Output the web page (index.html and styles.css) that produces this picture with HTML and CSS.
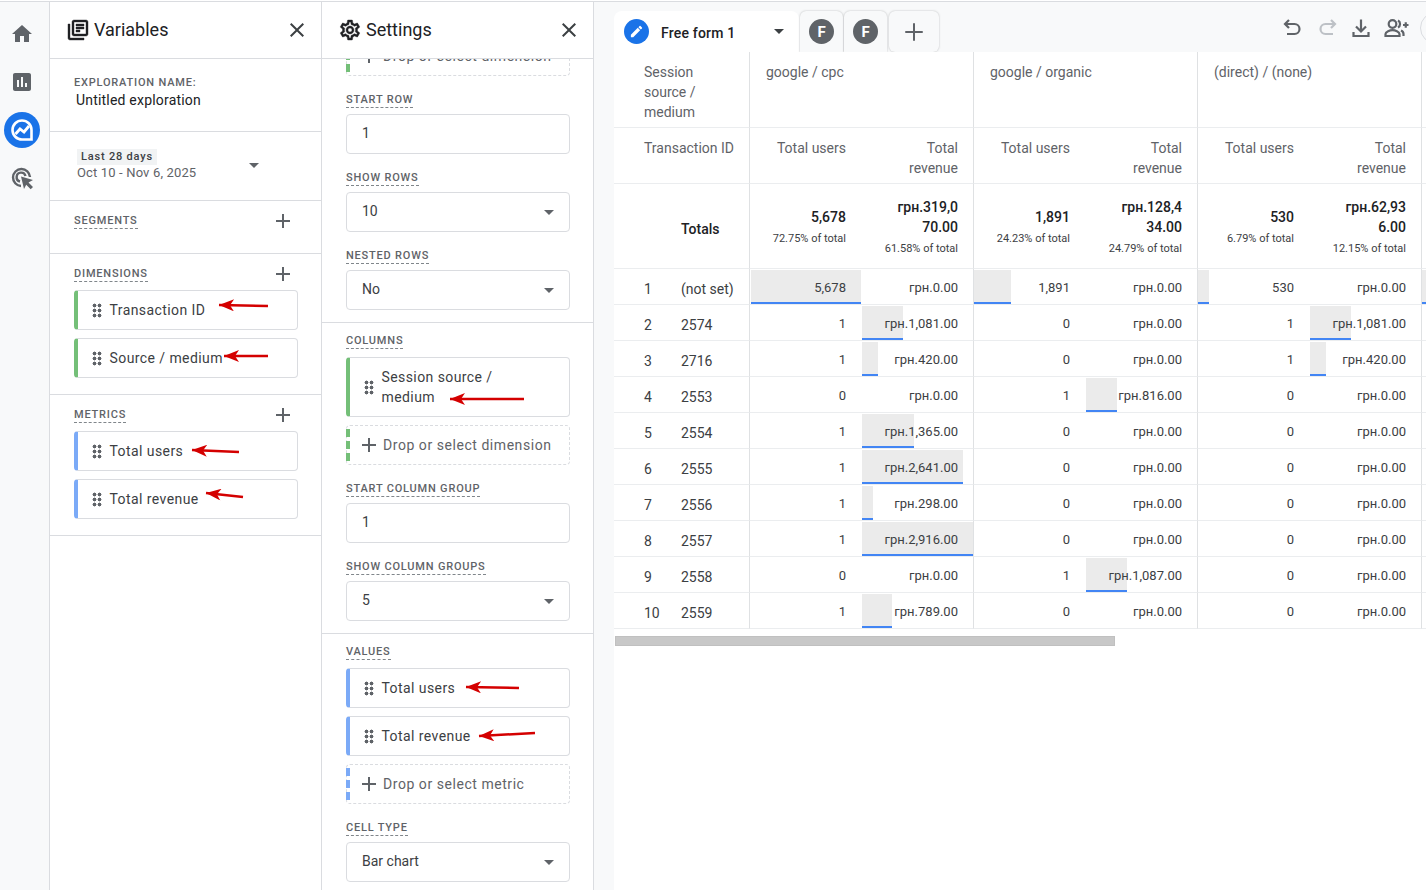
FILE: index.html
```html
<!DOCTYPE html>
<html lang="en">
<head>
<meta charset="utf-8">
<title>Free form 1</title>
<link rel="stylesheet" href="styles.css">
</head>
<body>
<div class="app">
  <nav class="rail">
    <svg class="rail-ico" viewBox="0 0 24 24"><path d="M10 20v-6h4v6h5v-8h3L12 3 2 12h3v8z"/></svg>
    <svg class="rail-ico rail-rep" viewBox="0 0 24 24"><path d="M19 3H5c-1.1 0-2 .9-2 2v14c0 1.1.9 2 2 2h14c1.1 0 2-.9 2-2V5c0-1.1-.9-2-2-2zM9 17H7v-7h2v7zm4 0h-2V7h2v10zm4 0h-2v-4h2v4z"/></svg>
    <svg class="rail-active" viewBox="0 0 36 36"><circle cx="18" cy="18" r="18" fill="#1a73e8"/><path d="M18 8.500a9.500 9.500 0 1 0 0 19h9.500V18A9.500 9.500 0 0 0 18 8.500z" fill="none" stroke="#fff" stroke-width="2.600"/><path d="M11.500 22l4.500-5 4 3 5-6" fill="none" stroke="#fff" stroke-width="2.800"/></svg>
    <svg class="rail-ico rail-adv" viewBox="0 0 24 24"><path d="M20 11a8.500 8.500 0 1 0-9 9" fill="none" stroke="#5f6368" stroke-width="2.400"/><path d="M15.500 10a4.500 4.500 0 1 0-5.500 5.500" fill="none" stroke="#5f6368" stroke-width="2.400"/><path d="M11 10.500l12 3.500-4.500 2.500 4.500 4.500-2.300 2.300-4.500-4.500-2.200 4.200z"/></svg>
  </nav>

  <aside class="panel">
    <header class="panel-head">
      <svg class="ico24 ink" viewBox="0 0 24 24"><path d="M4 6H2v14c0 1.100.9 2 2 2h14v-2H4V6zm16-4H8c-1.100 0-2 .9-2 2v12c0 1.100.9 2 2 2h12c1.100 0 2-.9 2-2V4c0-1.100-.9-2-2-2zm0 14H8V4h12v12zM10 9h8v2h-8zm0 3h4v2h-4zm0-6h8v2h-8z"/></svg>
      <span class="panel-title">Variables</span>
      <svg class="ico24 close" viewBox="0 0 24 24"><path d="M19 6.410 17.590 5 12 10.590 6.410 5 5 6.410 10.590 12 5 17.590 6.410 19 12 13.410 17.590 19 19 17.590 13.410 12z"/></svg>
    </header>
    <section class="sec sec-name">
      <div class="cap">Exploration name:</div>
      <div class="name">Untitled exploration</div>
    </section>
    <section class="sec sec-date">
      <div>
        <div class="date-chip">Last 28 days</div>
        <div class="date-range">Oct 10 - Nov 6, 2025</div>
      </div>
      <span class="caret"></span>
    </section>
    <section class="sec sec-seg">
      <div class="sec-row"><span class="label">Segments</span><svg class="ico24 grey plus" viewBox="0 0 24 24"><path d="M19 13h-6v6h-2v-6H5v-2h6V5h2v6h6v2z"/></svg></div>
    </section>
    <section class="sec sec-list">
      <div class="sec-row"><span class="label">Dimensions</span><svg class="ico24 grey plus" viewBox="0 0 24 24"><path d="M19 13h-6v6h-2v-6H5v-2h6V5h2v6h6v2z"/></svg></div>
      <div class="chip chip-dim"><i class="grip"></i><span>Transaction ID</span></div>
      <div class="chip chip-dim"><i class="grip"></i><span>Source / medium</span></div>
    </section>
    <section class="sec sec-list">
      <div class="sec-row"><span class="label">Metrics</span><svg class="ico24 grey plus" viewBox="0 0 24 24"><path d="M19 13h-6v6h-2v-6H5v-2h6V5h2v6h6v2z"/></svg></div>
      <div class="chip chip-met"><i class="grip"></i><span>Total users</span></div>
      <div class="chip chip-met"><i class="grip"></i><span>Total revenue</span></div>
    </section>
  </aside>

  <aside class="panel">
    <header class="panel-head">
      <svg class="ico24 ink" viewBox="0 0 24 24"><path d="M19.430 12.980c.04-.32.07-.64.07-.98 0-.34-.03-.66-.07-.98l2.110-1.650c.19-.15.24-.42.12-.64l-2-3.460c-.09-.16-.26-.25-.44-.25-.06 0-.12.01-.17.03l-2.490 1c-.52-.4-1.080-.73-1.690-.98l-.38-2.650C14.460 2.180 14.250 2 14 2h-4c-.25 0-.46.18-.49.42l-.38 2.650c-.61.25-1.170.59-1.690.98l-2.490-1c-.06-.02-.12-.03-.18-.03-.17 0-.34.09-.43.25l-2 3.460c-.13.22-.07.49.12.64l2.110 1.650c-.04.32-.07.65-.07.98 0 .33.03.66.07.98l-2.110 1.650c-.19.15-.24.42-.12.64l2 3.460c.09.16.26.25.44.25.06 0 .12-.01.17-.03l2.490-1c.52.4 1.080.73 1.690.98l.38 2.650c.03.24.24.42.49.42h4c.25 0 .46-.18.49-.42l.38-2.650c.61-.25 1.170-.59 1.690-.98l2.490 1c.06.02.12.03.18.03.17 0 .34-.09.43-.25l2-3.460c.12-.22.07-.49-.12-.64l-2.110-1.650zm-1.980-1.710c.04.31.05.52.05.73 0 .21-.02.43-.05.73l-.14 1.130.89.7 1.080.84-.7 1.210-1.270-.51-1.040-.42-.9.68c-.43.32-.84.56-1.250.73l-1.060.43-.16 1.130-.2 1.350h-1.400l-.19-1.350-.16-1.130-1.060-.43c-.43-.18-.83-.41-1.230-.71l-.91-.7-1.060.43-1.270.51-.7-1.210 1.080-.84.89-.7-.14-1.130c-.03-.31-.05-.54-.05-.74s.02-.43.05-.73l.14-1.130-.89-.7-1.080-.84.7-1.210 1.270.51 1.040.42.9-.68c.43-.32.84-.56 1.250-.73l1.060-.43.16-1.130.2-1.350h1.390l.19 1.350.16 1.130 1.060.43c.43.18.83.41 1.230.71l.91.7 1.060-.43 1.270-.51.7 1.210-1.070.85-.89.7.14 1.130zM12 8c-2.210 0-4 1.790-4 4s1.790 4 4 4 4-1.790 4-4-1.790-4-4-4zm0 6c-1.100 0-2-.9-2-2s.9-2 2-2 2 .9 2 2-.9 2-2 2z"/></svg>
      <span class="panel-title">Settings</span>
      <svg class="ico24 close" viewBox="0 0 24 24"><path d="M19 6.410 17.590 5 12 10.590 6.410 5 5 6.410 10.590 12 5 17.590 6.410 19 12 13.410 17.590 19 19 17.590 13.410 12z"/></svg>
    </header>
    <div class="scroll">
      <div class="scroll-in">
        <section class="set set-first">
          <div class="drop"><i class="dropbar dropbar-dim"></i><svg class="ico24 grey" viewBox="0 0 24 24"><path d="M19 13h-6v6h-2v-6H5v-2h6V5h2v6h6v2z"/></svg><span>Drop or select dimension</span></div>
          <div class="field"><span class="label">Start row</span><div class="input">1</div></div>
          <div class="field"><span class="label">Show rows</span><div class="input">10<span class="caret"></span></div></div>
          <div class="field"><span class="label">Nested rows</span><div class="input">No<span class="caret"></span></div></div>
        </section>
        <section class="set">
          <span class="label">Columns</span>
          <div class="chip chip-dim chip-tall"><i class="grip"></i><span>Session source /<br>medium</span></div>
          <div class="drop"><i class="dropbar dropbar-dim"></i><svg class="ico24 grey" viewBox="0 0 24 24"><path d="M19 13h-6v6h-2v-6H5v-2h6V5h2v6h6v2z"/></svg><span>Drop or select dimension</span></div>
          <div class="field"><span class="label">Start column group</span><div class="input">1</div></div>
          <div class="field"><span class="label">Show column groups</span><div class="input">5<span class="caret"></span></div></div>
        </section>
        <section class="set set-last">
          <span class="label">Values</span>
          <div class="chip chip-met"><i class="grip"></i><span>Total users</span></div>
          <div class="chip chip-met"><i class="grip"></i><span>Total revenue</span></div>
          <div class="drop"><i class="dropbar dropbar-met"></i><svg class="ico24 grey" viewBox="0 0 24 24"><path d="M19 13h-6v6h-2v-6H5v-2h6V5h2v6h6v2z"/></svg><span>Drop or select metric</span></div>
          <div class="field"><span class="label">Cell type</span><div class="input">Bar chart<span class="caret"></span></div></div>
        </section>
      </div>
    </div>
  </aside>

  <main class="main">
    <div class="tabbar">
      <div class="tab tab-on">
        <span class="tab-circle tab-blue"><svg viewBox="0 0 24 24"><path d="M3 17.250V21h3.750L17.810 9.940l-3.750-3.750L3 17.250zM20.710 7.040a1 1 0 0 0 0-1.410l-2.340-2.340a1 1 0 0 0-1.410 0l-1.830 1.830 3.750 3.750 1.830-1.830z"/></svg></span>
        <span class="tab-name">Free form 1</span>
        <span class="caret caret-dark"></span>
      </div>
      <div class="tab tab-s"><span class="tab-circle">F</span></div>
      <div class="tab tab-s"><span class="tab-circle">F</span></div>
      <div class="tab tab-add"><svg class="grey" viewBox="0 0 24 24"><path d="M19 12.800h-6.200V19h-1.600v-6.200H5v-1.600h6.200V5h1.600v6.200H19z"/></svg></div>
      <div class="tools">
        <svg class="tool" viewBox="0 0 24 24"><path d="M9 4 5 8l4 4M5 8h9.500a5 5 0 0 1 0 10H7"/></svg>
        <svg class="tool tool-off" viewBox="0 0 24 24"><path d="m15 4 4 4-4 4M19 8H9.500a5 5 0 0 0 0 10H17"/></svg>
        <svg class="tool tool-dl" viewBox="0 0 24 24"><path d="M12 3.500V15M7 10.500l5 5 5-5M4.500 16v4h15v-4"/></svg>
        <svg class="tool tool-share" viewBox="0 0 26 24"><circle cx="9.500" cy="8" r="3.800"/><path d="M2.500 20v-2c0-2.500 4.500-3.800 7-3.800s7 1.300 7 3.800v2zM15 4.500a4 4 0 0 1 0 7M18 14.500c1.500.7 2.500 2 2.500 3.500v2M20 9h5.500M22.750 6.200v5.600"/></svg>
        <span class="tool-ring"></span>
      </div>
    </div>

    <div class="canvas">
      <div class="grid">
        <div class="c h1 vb head-dim">Session source / medium</div>
        <div class="c h1 vb span2">google / cpc</div>
        <div class="c h1 vb span2">google / organic</div>
        <div class="c h1 vb span2">(direct) / (none)</div>
        <div class="c h1"></div>

        <div class="c h2 h2-dim vb">Transaction ID</div>
        <div class="c h2 n">Total users</div><div class="c h2 n vb">Total revenue</div>
        <div class="c h2 n">Total users</div><div class="c h2 n vb">Total revenue</div>
        <div class="c h2 n">Total users</div><div class="c h2 n vb">Total revenue</div>
        <div class="c h2"></div>

        <div class="c tot tot-dim vb"><span class="tot-name">Totals</span></div>
        <div class="c tot n"><b>5,678</b><small>72.75% of total</small></div>
        <div class="c tot n vb"><b>грн.319,0<br>70.00</b><small>61.58% of total</small></div>
        <div class="c tot n"><b>1,891</b><small>24.23% of total</small></div>
        <div class="c tot n vb"><b>грн.128,4<br>34.00</b><small>24.79% of total</small></div>
        <div class="c tot n"><b>530</b><small>6.79% of total</small></div>
        <div class="c tot n vb"><b>грн.62,93<br>6.00</b><small>12.15% of total</small></div>
        <div class="c tot"></div>

        <div class="c r id vb"><span class="i">1</span>(not set)</div>
        <div class="c r n"><i class="bar bar-in" style="width:110px"></i><span>5,678</span></div><div class="c r n vb"><span>грн.0.00</span></div>
        <div class="c r n"><i class="bar" style="width:37px"></i><span>1,891</span></div><div class="c r n vb"><span>грн.0.00</span></div>
        <div class="c r n"><i class="bar" style="width:11px"></i><span>530</span></div><div class="c r n vb"><span>грн.0.00</span></div>
        <div class="c r"><i class="bar" style="width:4px"></i></div>

        <div class="c r id vb"><span class="i">2</span>2574</div>
        <div class="c r n"><span>1</span></div><div class="c r n vb"><i class="bar" style="width:41px"></i><span>грн.1,081.00</span></div>
        <div class="c r n"><span>0</span></div><div class="c r n vb"><span>грн.0.00</span></div>
        <div class="c r n"><span>1</span></div><div class="c r n vb"><i class="bar" style="width:41px"></i><span>грн.1,081.00</span></div>
        <div class="c r"></div>

        <div class="c r id vb"><span class="i">3</span>2716</div>
        <div class="c r n"><span>1</span></div><div class="c r n vb"><i class="bar" style="width:16px"></i><span>грн.420.00</span></div>
        <div class="c r n"><span>0</span></div><div class="c r n vb"><span>грн.0.00</span></div>
        <div class="c r n"><span>1</span></div><div class="c r n vb"><i class="bar" style="width:16px"></i><span>грн.420.00</span></div>
        <div class="c r"></div>

        <div class="c r id vb"><span class="i">4</span>2553</div>
        <div class="c r n"><span>0</span></div><div class="c r n vb"><span>грн.0.00</span></div>
        <div class="c r n"><span>1</span></div><div class="c r n vb"><i class="bar" style="width:31px"></i><span>грн.816.00</span></div>
        <div class="c r n"><span>0</span></div><div class="c r n vb"><span>грн.0.00</span></div>
        <div class="c r"></div>

        <div class="c r id vb"><span class="i">5</span>2554</div>
        <div class="c r n"><span>1</span></div><div class="c r n vb"><i class="bar" style="width:52px"></i><span>грн.1,365.00</span></div>
        <div class="c r n"><span>0</span></div><div class="c r n vb"><span>грн.0.00</span></div>
        <div class="c r n"><span>0</span></div><div class="c r n vb"><span>грн.0.00</span></div>
        <div class="c r"></div>

        <div class="c r id vb"><span class="i">6</span>2555</div>
        <div class="c r n"><span>1</span></div><div class="c r n vb"><i class="bar" style="width:101px"></i><span>грн.2,641.00</span></div>
        <div class="c r n"><span>0</span></div><div class="c r n vb"><span>грн.0.00</span></div>
        <div class="c r n"><span>0</span></div><div class="c r n vb"><span>грн.0.00</span></div>
        <div class="c r"></div>

        <div class="c r id vb"><span class="i">7</span>2556</div>
        <div class="c r n"><span>1</span></div><div class="c r n vb"><i class="bar" style="width:11px"></i><span>грн.298.00</span></div>
        <div class="c r n"><span>0</span></div><div class="c r n vb"><span>грн.0.00</span></div>
        <div class="c r n"><span>0</span></div><div class="c r n vb"><span>грн.0.00</span></div>
        <div class="c r"></div>

        <div class="c r id vb"><span class="i">8</span>2557</div>
        <div class="c r n"><span>1</span></div><div class="c r n vb"><i class="bar" style="width:111px"></i><span>грн.2,916.00</span></div>
        <div class="c r n"><span>0</span></div><div class="c r n vb"><span>грн.0.00</span></div>
        <div class="c r n"><span>0</span></div><div class="c r n vb"><span>грн.0.00</span></div>
        <div class="c r"></div>

        <div class="c r id vb"><span class="i">9</span>2558</div>
        <div class="c r n"><span>0</span></div><div class="c r n vb"><span>грн.0.00</span></div>
        <div class="c r n"><span>1</span></div><div class="c r n vb"><i class="bar" style="width:41px"></i><span>грн.1,087.00</span></div>
        <div class="c r n"><span>0</span></div><div class="c r n vb"><span>грн.0.00</span></div>
        <div class="c r"></div>

        <div class="c r id vb"><span class="i">10</span>2559</div>
        <div class="c r n"><span>1</span></div><div class="c r n vb"><i class="bar" style="width:30px"></i><span>грн.789.00</span></div>
        <div class="c r n"><span>0</span></div><div class="c r n vb"><span>грн.0.00</span></div>
        <div class="c r n"><span>0</span></div><div class="c r n vb"><span>грн.0.00</span></div>
        <div class="c r"></div>
      </div>
      <div class="hscroll"></div>
    </div>
  </main>
</div>

<svg class="notes" viewBox="0 0 1426 890">
  <defs>
    <marker id="head" markerUnits="userSpaceOnUse" markerWidth="16" markerHeight="12" refX="0" refY="6" orient="auto" viewBox="0 0 16 12"><path d="M0 6 15 0 11 6 15 12z" fill="#d40000"/></marker>
  </defs>
  <g stroke="#d40000" stroke-width="2.500">
    <line x1="219" y1="305" x2="268" y2="306" marker-start="url(#head)"/>
    <line x1="224" y1="356" x2="268" y2="356" marker-start="url(#head)"/>
    <line x1="192" y1="450" x2="239" y2="452" marker-start="url(#head)"/>
    <line x1="206" y1="493" x2="243" y2="497" marker-start="url(#head)"/>
    <line x1="450" y1="399" x2="524" y2="399" marker-start="url(#head)"/>
    <line x1="466" y1="687" x2="519" y2="688" marker-start="url(#head)"/>
    <line x1="479" y1="736" x2="535" y2="733" marker-start="url(#head)"/>
  </g>
</svg>
</body>
</html>
```

FILE: styles.css
```css
* { box-sizing: border-box; }
html, body { margin: 0; height: 100%; overflow: hidden; background: #fff; }
body { position: relative; font-family: Roboto, "Liberation Sans", sans-serif; font-size: 14px; color: #3c4043; padding-top: 1px; }
.app { display: flex; height: 889px; border-top: 1px solid #dadce0; overflow: hidden; }

/* left rail */
.rail { width: 50px; flex: none; background: #f8f9fa; border-right: 1px solid #dadce0; display: flex; flex-direction: column; align-items: center; padding-top: 20px; padding-right: 5px; }
.rail-ico { width: 24px; height: 24px; fill: #5f6368; flex: none; }
.rail-rep { margin-top: 24px; }
.rail-active { width: 36px; height: 36px; flex: none; margin-top: 18px; }
.rail-adv { margin-top: 18px; }

/* side panels */
.panel { width: 272px; flex: none; border-right: 1px solid #dadce0; display: flex; flex-direction: column; background: #fff; min-height: 0; }
.panel-head { height: 57px; flex: none; display: flex; align-items: center; padding: 0 12px 1px 16px; gap: 4px; border-bottom: 1px solid #dadce0; background: #fff; }
.panel-title { font-size: 18px; color: #202124; flex: 1; }
.ico24 { width: 24px; height: 24px; flex: none; }
.ink { fill: #202124; stroke: #202124; stroke-width: .4; }
.grey { fill: #5f6368; }
.close { fill: #3c4043; }

.sec { padding-left: 24px; border-bottom: 1px solid #dadce0; }
.cap { font-size: 11px; line-height: 15px; font-weight: 500; letter-spacing: .8px; color: #5f6368; text-transform: uppercase; }
.sec-name { height: 73px; padding-top: 16px; }
.name { line-height: 20px; margin-left: 2px; color: #202124; letter-spacing: .2px; }
.sec-date { height: 69px; padding: 0 62px 2px 27px; display: flex; align-items: center; justify-content: space-between; }
.date-chip { display: inline-block; height: 16px; line-height: 16px; padding: 0 4px; background: #f1f3f4; font-size: 11px; font-weight: 500; letter-spacing: .8px; color: #3c4043; vertical-align: top; }
.date-range { font-size: 13px; line-height: 16px; color: #5f6368; letter-spacing: .15px; }
.caret { display: block; width: 0; height: 0; border-left: 5px solid transparent; border-right: 5px solid transparent; border-top: 5px solid #5f6368; flex: none; }
.caret-dark { border-top-color: #3c4043; }
.sec-seg { height: 53px; padding-top: 12px; }
.sec-list { padding-top: 12px; height: 141px; }
.sec-row { display: flex; align-items: center; justify-content: space-between; padding-right: 26px; }
.plus { margin: -4px 0; }
.label { display: inline-block; height: 16px; font-size: 11px; line-height: 16px; font-weight: 500; letter-spacing: .8px; color: #5f6368; text-transform: uppercase; border-bottom: 1px dashed #80868b; vertical-align: top; }

/* chips */
.chip { width: 224px; height: 40px; margin-top: 8px; display: flex; align-items: center; gap: 8px; padding-left: 14px; border: 1px solid #dadce0; border-left-width: 4px; border-radius: 4px; line-height: 20px; letter-spacing: .42px; color: #3c4043; background: #fff; }
.chip-dim { border-left-color: #74bf78; }
.chip-met { border-left-color: #7baaf7; }
.chip-tall { height: 60px; }
.grip { width: 10px; height: 15px; flex: none; margin-left: -.5px; background-image: radial-gradient(circle, #5f6368 1.700px, transparent 2.200px); background-size: 5px 5px; }

/* settings */
.scroll { flex: 1; min-height: 0; overflow: hidden; }
.scroll-in { margin-top: -23px; }
.set { padding: 10px 23px 12px 24px; border-bottom: 1px solid #dadce0; }
.set-first { padding-top: 0; }
.set-last { border-bottom: 0; }
.field { margin-top: 16px; }
.input { width: 224px; height: 40px; margin-top: 6px; display: flex; align-items: center; justify-content: space-between; padding: 0 15px 2px; border: 1px solid #dadce0; border-radius: 4px; color: #3c4043; }
.input .caret { margin-top: 2px; }
.drop { width: 224px; height: 40px; margin-top: 8px; display: flex; align-items: center; border: 1px dashed #dadce0; border-radius: 4px; color: #5f6368; letter-spacing: .55px; gap: 2px; }
.set-first .drop { margin-top: 0; }
.dropbar { width: 4px; height: 32px; margin: 0 5px 0 -1px; flex: none; }
.dropbar-dim { background: repeating-linear-gradient(to bottom, #74bf78 0 8px, transparent 8px 12px); }
.dropbar-met { background: repeating-linear-gradient(to bottom, #7baaf7 0 8px, transparent 8px 12px); }

/* main */
.main { flex: 1; min-width: 0; display: flex; flex-direction: column; background: #f8f9fa; padding-left: 20px; }
.tabbar { height: 50px; flex: none; display: flex; padding-top: 9px; }
.tab { height: 41px; flex: none; display: flex; align-items: center; justify-content: center; background: #f8f9fa; border-radius: 6px 6px 0 0; box-shadow: 0 0 2px rgba(60,64,67,.35); margin-right: 1px; }
.tab-on { width: 185px; background: #fff; justify-content: flex-start; padding: 0 15px 0 10px; border-radius: 8px 8px 0 0; box-shadow: none; }
.tab-s { width: 43px; }
.tab-add { width: 50px; margin-left: 1px; border-radius: 6px; }
.tab-add svg { width: 30px; height: 30px; }
.tab-circle { width: 25px; height: 25px; flex: none; border-radius: 50%; background: #5f6368; color: #fff; font-weight: 700; font-size: 15px; display: flex; align-items: center; justify-content: center; }
.tab-blue { background: #1a73e8; }
.tab-blue svg { width: 15px; height: 15px; fill: #fff; }
.tab-name { margin-left: 12px; margin-top: 2px; flex: 1; font-weight: 500; color: #202124; letter-spacing: .2px; }
.tools { margin-left: auto; display: flex; gap: 12px; align-items: center; height: 24px; margin-top: 5px; flex: none; width: 146px; }
.tool { width: 24px; height: 24px; flex: none; fill: none; stroke: #5f6368; stroke-width: 2.200; }
.tool-off { stroke: #bdc1c6; }
.tool-dl { margin-left: -3px; }
.tool-share { width: 26px; margin-left: -2px; }
.tool-ring { width: 32px; height: 32px; flex: none; border: 1px solid #dadce0; border-radius: 50%; margin-left: -1px; }

.canvas { flex: 1; min-height: 0; background: #fff; overflow: hidden; }
.grid { display: grid; grid-template-columns: 136px repeat(6, 112px) 4px; grid-template-rows: 76px 56px 85px repeat(10, 36px); }
.c { position: relative; border-bottom: 1px solid #ebedef; min-width: 0; }
.vb { border-right: 1px solid #dfe1e3; }
.span2 { grid-column: span 2; }
.h1 { padding: 10px 16px; line-height: 20px; color: #5f6368; }
.head-dim { padding: 10px 40px 0 30px; }
.h2 { padding-top: 10px; line-height: 20px; color: #5f6368; }
.h2-dim { padding-left: 30px; }
.n { text-align: right; padding-right: 16px; padding-left: 16px; }
.n.vb { padding-right: 15px; }
.tot { display: flex; flex-direction: column; justify-content: center; padding-top: 1px; }
.tot-dim { padding-top: 6px; }
.tot-name { font-weight: 500; color: #202124; margin-left: 67px; }
.tot b { font-weight: 500; line-height: 20px; color: #202124; }
.tot small { font-size: 11px; line-height: 16px; margin-top: 4px; color: #3c4043; white-space: nowrap; }
.r { display: flex; align-items: center; font-size: 13px; }
.r.n { justify-content: flex-end; padding-top: 2px; }
.r span { position: relative; }
.id { font-size: 14px; padding-top: 4px; padding-left: 30px; color: #3c4043; }
.id .i { width: 37px; flex: none; }
.bar { position: absolute; left: 0; top: 1px; bottom: 0; background: #ebebeb; border-bottom: 2px solid #4285f4; }
.bar-in { left: 1px; }
.hscroll { width: 500px; height: 10px; margin: 7px 0 0 1px; background: #c8c8c8; border: 1px solid #c0c0c0; }

/* annotation arrows drawn on top of the screenshot */
.notes { position: absolute; left: 0; top: 0; width: 1426px; height: 890px; pointer-events: none; }
```
